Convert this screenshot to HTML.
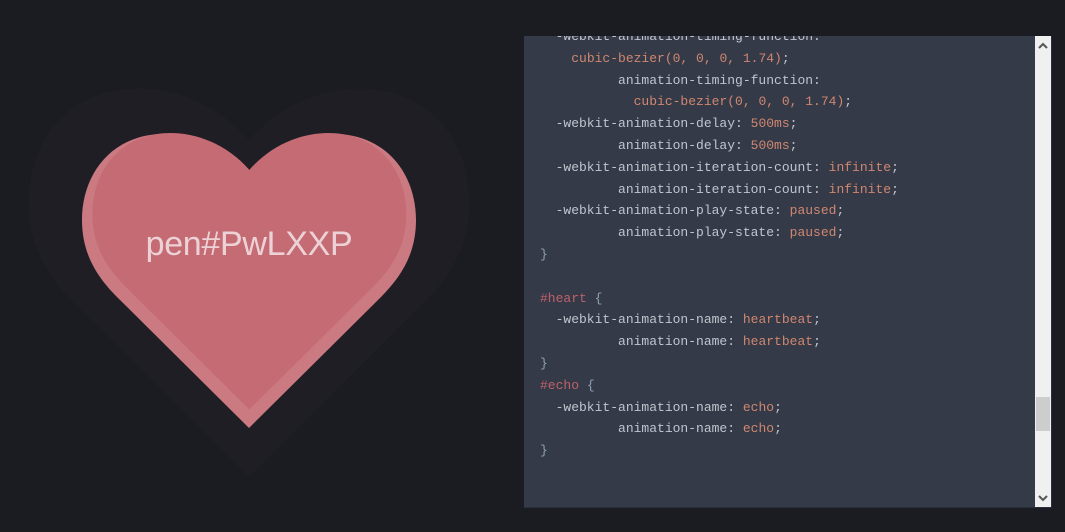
<!DOCTYPE html>
<html><head><meta charset="utf-8"><style>
html,body{margin:0;padding:0;background:#1a1c22;width:1065px;height:532px;overflow:hidden;position:relative}
svg.h{position:absolute;left:0;top:0}
.t{position:absolute;left:0;width:498px;top:225px;text-align:center;font-family:"Liberation Sans",sans-serif;font-size:34px;color:#ecd2d6;letter-spacing:-0.3px}
.panel{position:absolute;left:524px;top:36px;width:527px;height:471px;background:#343a48;border-right:1px solid #2a2f3b;border-bottom:1px solid #2a2f3b;overflow:hidden}
pre{position:absolute;left:16px;top:-10px;margin:0;font-family:"Liberation Mono",monospace;font-size:13px;line-height:21.8px;color:#c0c5ce}
.v{color:#d08770}.s{color:#bf616a}.b{color:#8fa1b3}
.sb{position:absolute;left:1035px;top:36px;width:16px;height:471px;background:#f0f0f0}
.th{position:absolute;left:1036px;top:397px;width:14px;height:34px;background:#cdcdcd}
</style></head><body>
<svg class="h" width="500" height="532" viewBox="0 0 500 532">
<defs><path id="hp" d="M249,173 C220,140 180,130 150,135 C105,142 82,180 82,220 C82,255 98,278 118,298 L249,428 L380,298 C400,278 416,255 416,220 C416,180 393,142 348,135 C318,130 278,140 249,173 Z"/></defs>
<use href="#hp" fill="#1f1e25" transform="translate(249 275.6) scale(1.32) translate(-249 -275.6)"/>
<use href="#hp" fill="#cc7a82"/>
<use href="#hp" fill="#c46b73" transform="translate(255 120) scale(0.94) translate(-255 -120)"/>
</svg>
<div class="t">pen#PwLXXP</div>
<div class="panel"><pre>  -webkit-animation-timing-function:
    <span class="v">cubic-bezier(0, 0, 0, 1.74)</span>;
          animation-timing-function:
            <span class="v">cubic-bezier(0, 0, 0, 1.74)</span>;
  -webkit-animation-delay: <span class="v">500ms</span>;
          animation-delay: <span class="v">500ms</span>;
  -webkit-animation-iteration-count: <span class="v">infinite</span>;
          animation-iteration-count: <span class="v">infinite</span>;
  -webkit-animation-play-state: <span class="v">paused</span>;
          animation-play-state: <span class="v">paused</span>;
<span class="b">}</span>

<span class="s">#heart</span> <span class="b">{</span>
  -webkit-animation-name: <span class="v">heartbeat</span>;
          animation-name: <span class="v">heartbeat</span>;
<span class="b">}</span>
<span class="s">#echo</span> <span class="b">{</span>
  -webkit-animation-name: <span class="v">echo</span>;
          animation-name: <span class="v">echo</span>;
<span class="b">}</span></pre></div>
<div class="sb"></div>
<div class="th"></div>
<svg style="position:absolute;left:1036px;top:40px" width="14" height="12"><path d="M3,8 L7,4 L11,8" stroke="#555" stroke-width="2" fill="none"/></svg>
<svg style="position:absolute;left:1036px;top:492px" width="14" height="12"><path d="M3,4 L7,8 L11,4" stroke="#555" stroke-width="2" fill="none"/></svg>
</body></html>
